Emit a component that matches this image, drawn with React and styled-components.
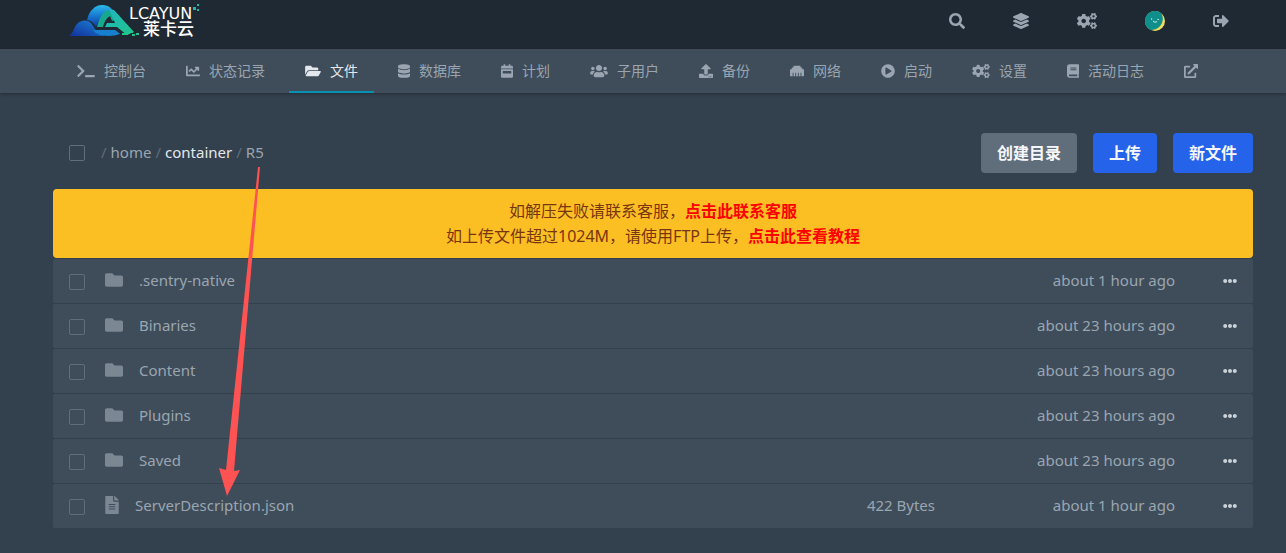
import React from 'react'
import styled, { createGlobalStyle } from 'styled-components'
import {
  FaBook,
  FaCalendarWeek,
  FaChartLine,
  FaCogs,
  FaDatabase,
  FaEllipsisH,
  FaEthernet,
  FaExternalLinkAlt,
  FaFileAlt,
  FaFolder,
  FaFolderOpen,
  FaLayerGroup,
  FaPlayCircle,
  FaSearch,
  FaSignOutAlt,
  FaTerminal,
  FaUpload,
  FaUsers,
} from 'react-icons/fa'

const GlobalStyle = createGlobalStyle`
  :root {
    --neutral-900: #1f2933;
    --neutral-800: #33404d;
    --neutral-700: #3f4d5a;
    --neutral-500: #606d7b;
    --neutral-400: #7b8793;
    --neutral-300: #9aa5b1;
    --neutral-200: #cbd2d9;
    --blue: #2563eb;
    --cyan: #0891b2;
    --amber: #fbbf24;
    --coral: #ff5252;
  }

  * {
    box-sizing: border-box;
  }

  body {
    margin: 0;
    min-height: 100vh;
    background: var(--neutral-800);
    color: var(--neutral-300);
    font-family: 'Noto Sans', 'Noto Sans CJK SC', sans-serif;
    font-size: 15px;
  }

  a {
    color: inherit;
    text-decoration: none;
  }

  button {
    font-family: inherit;
    border: none;
    cursor: pointer;
  }
`

const Wrapper = styled.div`
  max-width: 1286px;
  margin: 0 auto;
  padding: 0 33px 0 53px;
`

const TopBar = styled.header`
  background: var(--neutral-900);
`

const TopBarInner = styled(Wrapper)`
  display: flex;
  justify-content: space-between;
  align-items: center;
  height: 49px;
  padding-bottom: 7px;
`

const LogoLink = styled.a`
  display: flex;
  padding-left: 16px;

  text {
    fill: #fff;
  }
`

const TopActions = styled.nav`
  display: flex;
  align-items: center;
`

const TopAction = styled.a`
  display: flex;
  align-items: center;
  padding: 0 24px;

  svg {
    width: ${props => props.$iconWidth || 16}px;
    height: ${props => (props.$avatar ? 20 : 16)}px;
  }
`

const SubNav = styled.nav`
  background: var(--neutral-700);
  box-shadow: 0 1px 3px rgba(0, 0, 0, 0.3);
`

const SubNavInner = styled(Wrapper)`
  display: flex;
  gap: 8px;

  a:first-child {
    margin-left: 8px;
  }
`

const Tab = styled.a`
  display: flex;
  align-items: center;
  gap: 9px;
  padding: 12px 16px;
  font-size: 14px;
  line-height: 20px;
  white-space: nowrap;
  color: ${props => (props.$active ? '#e4e7eb' : 'var(--neutral-300)')};
  ${props => props.$active && 'box-shadow: inset 0 -2px var(--cyan);'}

  svg {
    width: ${props => props.$iconWidth || 14}px;
    height: 14px;
  }
`

const Content = styled(Wrapper)`
  padding-top: 40px;
  padding-bottom: 24px;
`

const Files = styled.main`
  position: relative;
`

const Toolbar = styled.div`
  display: flex;
  align-items: center;
  gap: 16px;
  margin-bottom: 16px;
  padding-left: 16px;
`

const Checkbox = styled.input.attrs({ type: 'checkbox' })`
  display: block;
  appearance: none;
  width: 16px;
  height: 16px;
  margin: 0;
  border: 1px solid var(--neutral-500);
  border-radius: 2px;
  background: transparent;

  &:checked {
    background: var(--blue);
  }
`

const Breadcrumbs = styled.nav`
  display: flex;
  flex: 1;
  gap: 4px;
  padding-bottom: 2px;
  color: var(--neutral-500);
`

const Crumb = styled.a`
  color: ${props => (props.$current ? '#e4e7eb' : 'var(--neutral-300)')};
`

const Button = styled.button`
  height: 40px;
  padding: 0 16px 2px;
  border-radius: 4px;
  background: ${props => (props.$secondary ? 'var(--neutral-500)' : 'var(--blue)')};
  color: #f5f7fa;
  font-size: 16px;
  font-weight: 700;
`

const Notice = styled.div`
  padding: 10px 16px 9px;
  border-radius: 4px;
  background: var(--amber);
  color: #78350f;
  font-size: 16px;
  line-height: 25px;
  text-align: center;

  p {
    margin: 0;
  }

  a {
    color: #f00;
    font-weight: 700;
  }
`

const FileTable = styled.table`
  width: 100%;
  table-layout: fixed;
  border-spacing: 0 1px;
`

const FileRow = styled.tr`
  height: 44px;
`

const Cell = styled.td`
  width: ${props => props.$width || 'auto'};
  padding: 0 0 2px;
  background: var(--neutral-700);
  text-align: ${props => props.$align || 'left'};
  white-space: nowrap;

  &:first-child {
    padding: 2px 0 0 16px;
    border-radius: 2px 0 0 2px;
  }

  &:last-child {
    padding: 2px 16px 0 0;
    border-radius: 0 2px 2px 0;
  }
`

const FileName = styled.a`
  display: flex;
  align-items: center;
  gap: 16px;

  svg {
    width: ${props => (props.$folder ? 18 : 14)}px;
    height: 18px;
    color: var(--neutral-400);
  }
`

const MenuButton = styled.button`
  padding: 0;
  background: none;
  color: var(--neutral-200);
  font-size: 14px;

  svg {
    display: block;
  }
`

const Pointer = styled.svg`
  position: absolute;
  top: 34px;
  left: 166px;
  pointer-events: none;
  fill: var(--coral);
`

const Logo = () => (
  <svg width="134" height="36" viewBox="0 0 134 36" role="img" aria-label="LCAYUN 莱卡云">
    <defs>
      <linearGradient id="cloud" x1="0" y1="0" x2="0" y2="1">
        <stop offset="0" stopColor="#2bb8e8" />
        <stop offset="0.5" stopColor="#1679cf" />
        <stop offset="1" stopColor="#1238a4" />
      </linearGradient>
      <linearGradient id="hill" x1="0" y1="1" x2="1" y2="0">
        <stop offset="0" stopColor="#13309a" />
        <stop offset="1" stopColor="#1a86d8" />
      </linearGradient>
      <linearGradient id="beam" x1="0" y1="0" x2="1" y2="1">
        <stop offset="0" stopColor="#1fb5c4" />
        <stop offset="1" stopColor="#1fc78a" />
      </linearGradient>
    </defs>
    <path d="M18 17 C20 8 26 2 33 2 C38 2 42 4 44 8 C36 8 31 14 27 24 C24 19 22 18 18 17Z" fill="url(#cloud)" />
    <path d="M0 33 C3 31 4 28 6 24 C9 17 17 16 21 19 C25 22 26 31 37 33Z" fill="url(#hill)" />
    <path d="M28 24 C30 15 34 8 40 7 L44 8 L46 17 L43 18 L41 13 C37 15 35 20 34 24Z" fill="#17a98f" />
    <path d="M40 6 L45 7 L65 29 L58 32 L48 24 L36 24 L38 20 L46 20Z" fill="url(#beam)" />
    <path d="M24 27 L46 27 C48 28 50 30 51 31 C43 34 28 34 24 27Z" fill="#177fd0" />
    <path d="M53 30h6v2h-6z M61 28h3v2h-3z M63 31h3v2h-3z M67 30h3v2h-3z" fill="#1fc78a" />
    <path d="M124 4h3v3h-3z M128 1h2v2h-2z M128 6h2v2h-2z" fill="#1bb6b0" />
    <text x="60" y="16" fontFamily="DejaVu Sans" fontSize="16">LCAYUN</text>
    <text x="74" y="32" fontFamily="Noto Sans CJK SC" fontSize="17" fontWeight="500">莱卡云</text>
  </svg>
)

const Avatar = () => (
  <svg viewBox="0 0 20 20" role="img" aria-label="avatar">
    <circle cx="10" cy="10" r="10" fill="#f2dc5d" />
    <path d="M16.5 2.4 A10 10 0 1 0 5.5 18.9 C13 19.5 21 12 16.5 2.4Z" fill="#0f8f8c" />
    <path d="M8 10 Q10 12.5 12 10.5" fill="none" stroke="#fff" strokeWidth="0.8" />
    <path d="M6 7.5h1.2v1H6z M12.5 8h1.2v1h-1.2z" fill="#fff" />
  </svg>
)

const topActions = [
  { label: '搜索', icon: <FaSearch /> },
  { label: '服务器', icon: <FaLayerGroup /> },
  { label: '管理', icon: <FaCogs />, width: 20 },
  { label: '账户', icon: <Avatar />, width: 20, avatar: true },
  { label: '退出', icon: <FaSignOutAlt /> },
]

const tabs = [
  { label: '控制台', icon: <FaTerminal />, width: 18 },
  { label: '状态记录', icon: <FaChartLine /> },
  { label: '文件', icon: <FaFolderOpen />, width: 16, active: true },
  { label: '数据库', icon: <FaDatabase />, width: 12 },
  { label: '计划', icon: <FaCalendarWeek />, width: 12 },
  { label: '子用户', icon: <FaUsers />, width: 18 },
  { label: '备份', icon: <FaUpload /> },
  { label: '网络', icon: <FaEthernet /> },
  { label: '启动', icon: <FaPlayCircle /> },
  { label: '设置', icon: <FaCogs />, width: 18 },
  { label: '活动日志', icon: <FaBook />, width: 12 },
]

const files = [
  { name: '.sentry-native', modified: 'about 1 hour ago' },
  { name: 'Binaries', modified: 'about 23 hours ago' },
  { name: 'Content', modified: 'about 23 hours ago' },
  { name: 'Plugins', modified: 'about 23 hours ago' },
  { name: 'Saved', modified: 'about 23 hours ago' },
  { name: 'ServerDescription.json', size: '422 Bytes', modified: 'about 1 hour ago' },
]

const App = () => {
  return (
    <>
      <GlobalStyle />
      <TopBar>
        <TopBarInner>
          <LogoLink href="#"><Logo /></LogoLink>
          <TopActions>
            {topActions.map(({ label, icon, width, avatar }) => (
              <TopAction key={label} href="#" aria-label={label} $iconWidth={width} $avatar={avatar}>
                {icon}
              </TopAction>
            ))}
          </TopActions>
        </TopBarInner>
      </TopBar>
      <SubNav>
        <SubNavInner>
          {tabs.map(({ label, icon, width, active }) => (
            <Tab key={label} href="#" $iconWidth={width} $active={active}>
              {icon}
              <span>{label}</span>
            </Tab>
          ))}
          <Tab href="#" aria-label="外部链接"><FaExternalLinkAlt /></Tab>
        </SubNavInner>
      </SubNav>
      <Content>
        <Files>
          <Toolbar>
            <Checkbox aria-label="全选" />
            <Breadcrumbs>
              <span>/</span>
              <Crumb href="#">home</Crumb>
              <span>/</span>
              <Crumb href="#" $current>container</Crumb>
              <span>/</span>
              <Crumb href="#">R5</Crumb>
            </Breadcrumbs>
            <Button $secondary>创建目录</Button>
            <Button>上传</Button>
            <Button>新文件</Button>
          </Toolbar>
          <Notice>
            <p>如解压失败请联系客服，<a href="#">点击此联系客服</a></p>
            <p>如上传文件超过1024M，请使用FTP上传，<a href="#">点击此查看教程</a></p>
          </Notice>
          <FileTable>
            <tbody>
              {files.map(({ name, size, modified }) => (
                <FileRow key={name}>
                  <Cell $width="52px"><Checkbox aria-label={name} /></Cell>
                  <Cell>
                    <FileName href="#" $folder={!size}>
                      {size ? <FaFileAlt /> : <FaFolder />}
                      <span>{name}</span>
                    </FileName>
                  </Cell>
                  <Cell $width="16%" $align="right">{size}</Cell>
                  <Cell $width="20%" $align="right">{modified}</Cell>
                  <Cell $width="78px" $align="right">
                    <MenuButton aria-label={`${name} 菜单`}><FaEllipsisH /></MenuButton>
                  </Cell>
                </FileRow>
              ))}
            </tbody>
          </FileTable>
          <Pointer width="42" height="330" viewBox="0 0 42 330" aria-hidden="true">
            <path d="M39 0 L41 0 L15 304 L21 303 L8 329 L0 301 L7 303Z" />
          </Pointer>
        </Files>
      </Content>
    </>
  )
}

export default App
